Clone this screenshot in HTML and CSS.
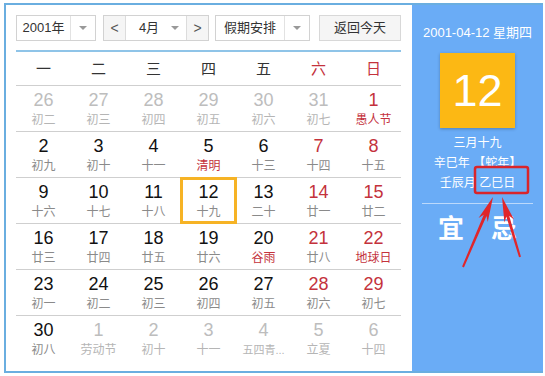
FILE: index.html
```html
<!DOCTYPE html>
<html>

<head>
  <title>万年历</title>
  <link rel="stylesheet" href="styles.css">
</head>

<body>
  <div class="calendar">
    <div class="main">
      <div class="toolbar">
        <div class="select year-select">
          <span class="select-text">2001年</span>
          <span class="select-arrow"></span>
        </div>
        <div class="month-group">
          <span class="nav-btn">&lt;</span>
          <div class="month-select">
            <span class="select-text">4月</span>
            <span class="caret"></span>
          </div>
          <span class="nav-btn">&gt;</span>
        </div>
        <div class="select holiday-select">
          <span class="select-text">假期安排</span>
          <span class="select-arrow"></span>
        </div>
        <span class="today-btn">返回今天</span>
      </div>

      <div class="table">
        <div class="week-head">
          <span>一</span><span>二</span><span>三</span><span>四</span><span>五</span>
          <span class="red">六</span><span class="red">日</span>
        </div>

        <div class="week">
          <div class="day other"><b>26</b><i>初二</i></div>
          <div class="day other"><b>27</b><i>初三</i></div>
          <div class="day other"><b>28</b><i>初四</i></div>
          <div class="day other"><b>29</b><i>初五</i></div>
          <div class="day other"><b>30</b><i>初六</i></div>
          <div class="day other"><b>31</b><i>初七</i></div>
          <div class="day weekend fest"><b>1</b><i>愚人节</i></div>
        </div>

        <div class="week">
          <div class="day"><b>2</b><i>初九</i></div>
          <div class="day"><b>3</b><i>初十</i></div>
          <div class="day"><b>4</b><i>十一</i></div>
          <div class="day fest"><b>5</b><i>清明</i></div>
          <div class="day"><b>6</b><i>十三</i></div>
          <div class="day weekend"><b>7</b><i>十四</i></div>
          <div class="day weekend"><b>8</b><i>十五</i></div>
        </div>

        <div class="week">
          <div class="day"><b>9</b><i>十六</i></div>
          <div class="day"><b>10</b><i>十七</i></div>
          <div class="day"><b>11</b><i>十八</i></div>
          <div class="day selected"><b>12</b><i>十九</i></div>
          <div class="day"><b>13</b><i>二十</i></div>
          <div class="day weekend"><b>14</b><i>廿一</i></div>
          <div class="day weekend"><b>15</b><i>廿二</i></div>
        </div>

        <div class="week">
          <div class="day"><b>16</b><i>廿三</i></div>
          <div class="day"><b>17</b><i>廿四</i></div>
          <div class="day"><b>18</b><i>廿五</i></div>
          <div class="day"><b>19</b><i>廿六</i></div>
          <div class="day fest"><b>20</b><i>谷雨</i></div>
          <div class="day weekend"><b>21</b><i>廿八</i></div>
          <div class="day weekend fest"><b>22</b><i>地球日</i></div>
        </div>

        <div class="week">
          <div class="day"><b>23</b><i>初一</i></div>
          <div class="day"><b>24</b><i>初二</i></div>
          <div class="day"><b>25</b><i>初三</i></div>
          <div class="day"><b>26</b><i>初四</i></div>
          <div class="day"><b>27</b><i>初五</i></div>
          <div class="day weekend"><b>28</b><i>初六</i></div>
          <div class="day weekend"><b>29</b><i>初七</i></div>
        </div>

        <div class="week">
          <div class="day"><b>30</b><i>初八</i></div>
          <div class="day other"><b>1</b><i>劳动节</i></div>
          <div class="day other"><b>2</b><i>初十</i></div>
          <div class="day other"><b>3</b><i>十一</i></div>
          <div class="day other"><b>4</b><i class="short">五四青...</i></div>
          <div class="day other"><b>5</b><i>立夏</i></div>
          <div class="day other"><b>6</b><i>十四</i></div>
        </div>
      </div>
    </div>

    <div class="side">
      <div class="side-date">2001-04-12 星期四</div>
      <div class="side-day">12</div>
      <div class="side-lunar">
        <p>三月十九</p>
        <p>辛巳年 【蛇年】</p>
        <p>壬辰月 乙巳日</p>
      </div>
      <div class="side-yiji">
        <span>宜</span>
        <span>忌</span>
      </div>
    </div>
  </div>

  <!-- annotation drawn over the screenshot -->
  <svg class="marks" width="545" height="376" viewBox="0 0 545 376">
    <rect x="475" y="167" width="53" height="26" rx="2" fill="none" stroke="#d9252b" stroke-width="2.5" />
    <polygon fill="#e0262b"
      points="493,197 487.75,221.95 486.5,215.97 463.92,267.39 462.08,266.61 483.74,214.79 478.55,218" />
    <polygon fill="#e0262b"
      points="502,197 513.98,219.52 509.19,215.74 520.96,256.71 519.04,257.29 506.31,216.6 504.4,222.4" />
  </svg>
</body>

</html>
```

FILE: styles.css
```css
body {
  margin: 0;
  background: #fff;
  font-family: "Liberation Sans", "Noto Sans CJK SC", sans-serif;
  color: #222;
}

.calendar {
  display: flex;
  width: 537px;
  height: 366px;
  margin: 3px 0 0 4px;
  border: 2px solid #6aaee0;
  border-right: none;
}

.main {
  width: 385px;
  padding: 10px 11px 10px 10px;
}

/* toolbar */
.toolbar {
  display: flex;
  height: 26px;
  font-size: 13px;
  color: #333;
}

.select {
  display: flex;
  box-sizing: border-box;
  height: 26px;
  border: 1px solid #d2d2d2;
  background: #fff;
}

.select-text {
  flex: 1;
  text-align: center;
  line-height: 24px;
}

.select-arrow {
  width: 24px;
  border-left: 1px solid #e2e2e2;
  position: relative;
}

.select-arrow::after,
.caret::after {
  content: "";
  position: absolute;
  left: 50%;
  top: 10px;
  margin-left: -4px;
  border-left: 4px solid transparent;
  border-right: 4px solid transparent;
  border-top: 4px solid #999;
}

.year-select {
  width: 80px;
}

.month-group {
  display: flex;
  box-sizing: border-box;
  width: 106px;
  height: 26px;
  margin-left: 7px;
  border: 1px solid #d2d2d2;
}

.nav-btn {
  width: 21px;
  text-align: center;
  line-height: 24px;
  color: #555;
  background: #f5f5f5;
  font-size: 14px;
}

.month-select {
  display: flex;
  flex: 1;
  border-left: 1px solid #dcdcdc;
  border-right: 1px solid #dcdcdc;
  padding-left: 8px;
}

.caret {
  width: 22px;
  position: relative;
}

.holiday-select {
  width: 95px;
  margin-left: 6px;
}

.today-btn {
  box-sizing: border-box;
  width: 82px;
  height: 26px;
  margin-left: 9px;
  border: 1px solid #d8d8d8;
  background: #f5f5f5;
  text-align: center;
  line-height: 24px;
}

/* table */
.table {
  margin-top: 9px;
  border-top: 2px solid #8fc4e8;
}

.week-head,
.week {
  display: grid;
  grid-template-columns: repeat(7, 55px);
  border-bottom: 1px solid #cfcfcf;
}

.week:last-child {
  border-bottom: none;
}

.week-head span {
  height: 33px;
  line-height: 33px;
  text-align: center;
  font-size: 15px;
  color: #333;
}

.week-head .red {
  color: #c4323c;
}

.day {
  height: 45px;
  padding-top: 4px;
  box-sizing: border-box;
  text-align: center;
}

.day b {
  display: block;
  font-weight: normal;
  font-size: 18px;
  line-height: 20px;
  color: #111;
}

.day i {
  display: block;
  margin-top: 2px;
  font-style: normal;
  font-size: 12px;
  line-height: 16px;
  color: #8a8a8a;
  white-space: nowrap;
}

.day i.short {
  font-size: 11px;
}

.day.weekend b {
  color: #c4323c;
}

.day.fest i {
  color: #c4323c;
}

.day.other b {
  color: #bdbdbd;
}

.day.other i {
  color: #b5b5b5;
}

.day.selected {
  outline: 3px solid #f6b325;
  outline-offset: -2px;
}

/* side panel */
.side {
  width: 131px;
  background: #6aacf6;
  color: #fff;
  text-align: center;
}

.side-date {
  margin-top: 18px;
  font-size: 13px;
  line-height: 20px;
}

.side-day {
  width: 75px;
  height: 75px;
  margin: 10px auto 0;
  background: #fcb814;
  font-size: 45px;
  line-height: 75px;
  box-shadow: 0 1px 3px rgba(0, 0, 0, 0.25);
}

.side-lunar {
  margin-top: 5px;
  font-size: 12px;
  line-height: 20px;
}

.side-lunar p {
  margin: 0;
}

.side-yiji {
  display: flex;
  justify-content: center;
  gap: 27px;
  margin: 10px 10px 0;
  padding-top: 10px;
  border-top: 1px solid rgba(255, 255, 255, 0.55);
  font-size: 26px;
  font-weight: bold;
  line-height: 30px;
}

.marks {
  position: absolute;
  top: 0;
  left: 0;
  pointer-events: none;
}
```
